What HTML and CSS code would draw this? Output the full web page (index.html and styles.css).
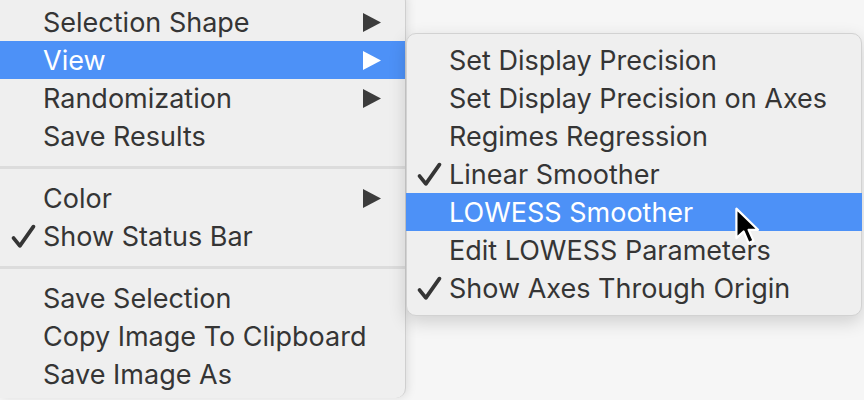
FILE: index.html
```html
<!DOCTYPE html>
<html>
<head>
<meta charset="utf-8">
<link rel="stylesheet" href="styles.css">
</head>
<body>
<div class="stage">
  <div class="menu main">
    <div class="row"><span class="mark"></span><span class="label">Selection Shape</span><svg class="arrow" viewBox="0 0 18 19"><polygon points="0,0 18,9.5 0,19"/></svg></div>
    <div class="row active"><span class="mark"></span><span class="label">View</span><svg class="arrow" viewBox="0 0 18 19"><polygon points="0,0 18,9.5 0,19"/></svg></div>
    <div class="row"><span class="mark"></span><span class="label">Randomization</span><svg class="arrow" viewBox="0 0 18 19"><polygon points="0,0 18,9.5 0,19"/></svg></div>
    <div class="row"><span class="mark"></span><span class="label">Save Results</span></div>
    <div class="sep"></div>
    <div class="row"><span class="mark"></span><span class="label">Color</span><svg class="arrow" viewBox="0 0 18 19"><polygon points="0,0 18,9.5 0,19"/></svg></div>
    <div class="row"><span class="mark"><svg class="check" viewBox="0 0 24 24"><path d="M2.5 13.5 L8.5 21 L21.5 2.5"/></svg></span><span class="label">Show Status Bar</span></div>
    <div class="sep"></div>
    <div class="row"><span class="mark"></span><span class="label">Save Selection</span></div>
    <div class="row"><span class="mark"></span><span class="label">Copy Image To Clipboard</span></div>
    <div class="row"><span class="mark"></span><span class="label">Save Image As</span></div>
  </div>
  <div class="menu sub">
    <div class="row"><span class="mark"></span><span class="label">Set Display Precision</span></div>
    <div class="row"><span class="mark"></span><span class="label">Set Display Precision on Axes</span></div>
    <div class="row"><span class="mark"></span><span class="label">Regimes Regression</span></div>
    <div class="row"><span class="mark"><svg class="check" viewBox="0 0 24 24"><path d="M2.5 13.5 L8.5 21 L21.5 2.5"/></svg></span><span class="label">Linear Smoother</span></div>
    <div class="row active hover"><span class="mark"></span><span class="label">LOWESS Smoother</span>
      <svg class="cursor" viewBox="0 0 24 36"><path d="M2 1.5 L2 28 L8.5 22 L13 32.5 L17.5 30.5 L13 20.5 L21.5 20.5 Z"/></svg>
    </div>
    <div class="row"><span class="mark"></span><span class="label">Edit LOWESS Parameters</span></div>
    <div class="row"><span class="mark"><svg class="check" viewBox="0 0 24 24"><path d="M2.5 13.5 L8.5 21 L21.5 2.5"/></svg></span><span class="label">Show Axes Through Origin</span></div>
  </div>
</div>
</body>
</html>
```

FILE: styles.css
```css
html, body {
  margin: 0;
  padding: 0;
  background: #f6f6f6;
  overflow: hidden;
}
.stage {
  width: 864px;
  height: 400px;
  display: flex;
  align-items: flex-start;
  font-family: Inter, "Noto Sans", sans-serif;
  font-size: 27px;
  color: #353535;
}
.menu {
  background: #efefef;
  box-sizing: border-box;
}
.main {
  width: 406px;
  margin-top: -8px;
  padding: 11px 0 5px;
  border-right: 1px solid #cfcfcf;
  border-radius: 0 10px 10px 0;
  box-shadow: 2px 0 10px rgba(0,0,0,0.10);
  flex-shrink: 0;
}
.sub {
  width: 456px;
  margin-top: 33px;
  padding: 7px 0 8px;
  border: 1px solid #d2d2d2;
  border-radius: 10px;
  box-shadow: 0 6px 18px rgba(0,0,0,0.16);
  flex-shrink: 0;
  position: relative;
  z-index: 1;
}
.row {
  height: 38px;
  display: flex;
  align-items: center;
  position: relative;
}
.sub .row { margin-left: -1px; margin-right: -1px; }
.mark {
  width: 43px;
  flex-shrink: 0;
  display: flex;
  align-items: center;
}
.label {
  flex: 1;
  white-space: nowrap;
}
.arrow {
  width: 18px;
  height: 19px;
  margin-right: 24px;
  fill: #3c3c3c;
}
.active {
  background: #4d91f7;
  color: #ffffff;
}
.active .arrow { fill: #ffffff; }
.check {
  width: 25px;
  height: 25px;
  margin-left: 11px;
  fill: none;
  stroke: #353535;
  stroke-width: 3.6;
  stroke-linecap: round;
  stroke-linejoin: round;
}
.sep {
  height: 24px;
  display: flex;
  align-items: center;
}
.sep::before {
  content: "";
  display: block;
  width: 100%;
  height: 3px;
  background: #dcdcdc;
}
.cursor {
  position: absolute;
  left: 328px;
  top: 14px;
  width: 27px;
  height: 40px;
  fill: #000;
  stroke: #fff;
  stroke-width: 2;
  stroke-linejoin: round;
}
```
